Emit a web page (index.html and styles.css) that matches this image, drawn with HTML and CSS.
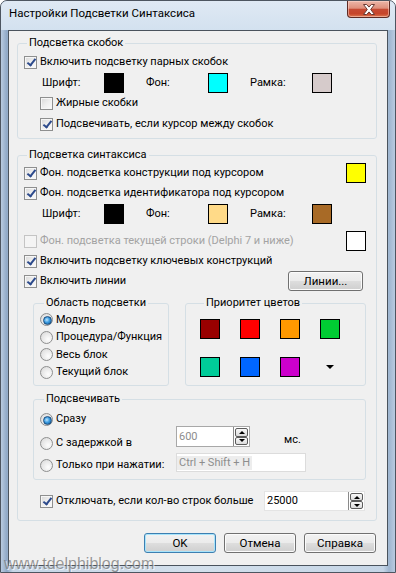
FILE: index.html
```html
<!DOCTYPE html>
<html lang="ru">
<head>
<meta charset="UTF-8">
<title>Настройки Подсветки Синтаксиса</title>
<link rel="stylesheet" href="styles.css">
</head>
<body>
<div class="window">
    <div class="titlebar">
        <span class="title">Настройки Подсветки Синтаксиса</span>
        <span class="close">
            <svg width="14" height="11" viewBox="0 0 14 11"><path d="M1.5 0.5h3.2l2.3 2.6 2.3-2.6h3.2l-3.8 5 3.8 5h-3.2l-2.3-2.6-2.3 2.6h-3.2l3.8-5z" fill="#fff" stroke="#6a3a33" stroke-width="1"/></svg>
        </span>
    </div>

    <div class="client">
        <!-- brackets -->
        <fieldset class="group main brackets">
            <legend>Подсветка скобок</legend>
            <div class="row"><span class="check on"></span><span class="txt">Включить подсветку парных скобок</span></div>
            <div class="colors">
                <span class="clabel">Шрифт:</span><span class="swatch black"></span>
                <span class="clabel">Фон:</span><span class="swatch cyan"></span>
                <span class="clabel">Рамка:</span><span class="swatch rose"></span>
            </div>
            <div class="row indent"><span class="check"></span><span class="txt">Жирные скобки</span></div>
            <div class="row indent mt1"><span class="check on"></span><span class="txt">Подсвечивать, если курсор между скобок</span></div>
        </fieldset>

        <!-- syntax -->
        <fieldset class="group main syntax">
            <legend>Подсветка синтаксиса</legend>
            <div class="row split">
                <span class="opt"><span class="check on"></span><span class="txt">Фон. подсветка конструкции под курсором</span></span>
                <span class="swatch yellow"></span>
            </div>
            <div class="row"><span class="check on"></span><span class="txt">Фон. подсветка идентификатора под курсором</span></div>
            <div class="colors mt3">
                <span class="clabel">Шрифт:</span><span class="swatch black"></span>
                <span class="clabel">Фон:</span><span class="swatch peach"></span>
                <span class="clabel">Рамка:</span><span class="swatch brown"></span>
            </div>
            <div class="row split mt7">
                <span class="opt disabled"><span class="check"></span><span class="txt">Фон. подсветка текущей строки (Delphi 7 и ниже)</span></span>
                <span class="swatch white"></span>
            </div>
            <div class="row"><span class="check on"></span><span class="txt">Включить подсветку ключевых конструкций</span></div>
            <div class="row split">
                <span class="opt"><span class="check on"></span><span class="txt">Включить линии</span></span>
                <button class="btn lines">Линии...</button>
            </div>

            <div class="subgroups">
                <fieldset class="group sub area">
                    <legend>Область подсветки</legend>
                    <div class="radio-row"><span class="radio on"></span><span class="txt">Модуль</span></div>
                    <div class="radio-row"><span class="radio"></span><span class="txt">Процедура/Функция</span></div>
                    <div class="radio-row"><span class="radio"></span><span class="txt">Весь блок</span></div>
                    <div class="radio-row"><span class="radio"></span><span class="txt">Текущий блок</span></div>
                </fieldset>
                <fieldset class="group sub priority">
                    <legend>Приоритет цветов</legend>
                    <div class="prio-grid">
                        <span class="swatch p1"></span>
                        <span class="swatch p2"></span>
                        <span class="swatch p3"></span>
                        <span class="swatch p4"></span>
                        <span class="swatch p5"></span>
                        <span class="swatch p6"></span>
                        <span class="swatch p7"></span>
                        <span class="more"><span class="arrow"></span></span>
                    </div>
                </fieldset>
            </div>

            <fieldset class="group sub when">
                <legend>Подсвечивать</legend>
                <div class="when-row first"><span class="radio on"></span><span class="txt">Сразу</span></div>
                <div class="when-row">
                    <span class="when-label lower"><span class="radio"></span><span class="txt">С задержкой в</span></span>
                    <span class="edit delay">
                        <span class="val dim">600</span>
                        <span class="spin"><span class="up"></span><span class="down"></span></span>
                    </span>
                    <span class="ms">мс.</span>
                </div>
                <div class="when-row mt2">
                    <span class="when-label hot"><span class="radio"></span><span class="txt">Только при нажатии:</span></span>
                    <span class="edit hotkey"><span class="val keys">Ctrl + Shift + H</span></span>
                </div>
            </fieldset>

            <div class="row indent limit">
                <span class="check on"></span><span class="txt">Отключать, если кол-во строк больше</span>
                <span class="edit lines-max">
                    <span class="val">25000</span>
                    <span class="spin"><span class="up"></span><span class="down"></span></span>
                </span>
            </div>
        </fieldset>

        <div class="buttons">
            <button class="btn default">OK</button>
            <button class="btn">Отмена</button>
            <button class="btn">Справка</button>
        </div>
    </div>

    <div class="watermark">www.tdelphiblog.com</div>
</div>
</body>
</html>
```

FILE: styles.css
```css
/* Vista-like dialog */
* {
    box-sizing: border-box;
}

body {
    margin: 0;
    font-family: Roboto, "Liberation Sans", sans-serif;
    font-size: 11px;
    line-height: 14px;
    color: #000;
    background: #fff;
}

.window {
    position: relative;
    width: 396px;
    height: 573px;
    overflow: hidden;
    padding: 0 7px 3px 7px;
    border: 1px solid #4d5560;
    border-radius: 7px 7px 0 0;
    background: linear-gradient(90deg, #b9cbe0 0%, #8fa8c6 1.5%, #c5d5e6 3%, #d3e0ec 50%, #c5d5e6 97%, #9fb6d0 98.5%, #b9cbe0 100%);
}

.titlebar {
    display: flex;
    align-items: flex-start;
    height: 29px;
    margin: 0 -7px;
    padding: 0 5px 0 8px;
    background: linear-gradient(#dfe9f4, #d3e1ef);
}

.title {
    margin: 4px 0 0 0;
    font-size: 11.5px;
    line-height: 16px;
}

.close {
    display: flex;
    align-items: center;
    justify-content: center;
    margin-left: auto;
    width: 43px;
    height: 17px;
    border: 1px solid #5e2b24;
    border-top: none;
    border-radius: 0 0 4px 4px;
    background: linear-gradient(#ecb6a8 0%, #df8f7c 45%, #c64a33 52%, #c6452a 80%, #de7a52 100%);
    box-shadow: inset 0 0 0 1px rgba(255, 220, 210, 0.5);
}

.client {
    width: 380px;
    padding: 0 0 12px 0;
    border: 1px solid #4a535d;
    background: #f0f0f0;
}

/* group boxes */
.group {
    margin: 0;
    padding: 0;
    border: 1px solid #d5dfe5;
    border-radius: 3px;
    min-width: 0;
}

.group legend {
    padding: 0 2px;
    margin-left: 4px;
    line-height: 14px;
}

.main {
    width: 360px;
    margin-left: 8px;
    padding: 0 10px 0 6px;
}

.main legend {
    margin-left: 3px;
}

.brackets {
    margin-top: 5px;
    padding-top: 2px;
    padding-bottom: 4px;
}

.syntax {
    margin-top: 9px;
    padding-top: 1px;
    padding-bottom: 9px;
}

/* rows */
.row {
    display: flex;
    align-items: center;
    height: 20px;
}

.row.split {
    justify-content: space-between;
}

.opt {
    display: flex;
    align-items: center;
}

.indent {
    margin-left: 16px;
}

.mt1 { margin-top: 1px; }
.mt2 { margin-top: 2px; }
.mt3 { margin-top: 3px; }
.mt7 { margin-top: 7px; }

.txt {
    white-space: nowrap;
}

.check + .txt,
.radio + .txt {
    margin-left: 3px;
}

.disabled {
    color: #a3a3a3;
}

/* checkbox */
.check {
    position: relative;
    flex: none;
    width: 13px;
    height: 13px;
    border: 1px solid #8e8f8f;
    background: linear-gradient(135deg, #d8d8d8 0%, #eeeeee 50%, #fbfbfb 100%);
    box-shadow: inset 0 0 0 1px #f6f6f6;
}

.check.on::after {
    content: "";
    position: absolute;
    left: 3.5px;
    top: 0.5px;
    width: 3px;
    height: 7px;
    border: solid #2c4a8c;
    border-width: 0 2px 2px 0;
    transform: rotate(38deg);
}

.disabled .check {
    border-color: #c4c4c4;
    background: #f4f4f4;
    box-shadow: none;
}

/* radio */
.radio {
    position: relative;
    flex: none;
    width: 13px;
    height: 13px;
    border: 1px solid #8e8f8f;
    border-radius: 50%;
    background: radial-gradient(circle at 65% 65%, #fdfdfd 0%, #e6e6e6 60%, #d2d2d2 100%);
}

.radio.on::after {
    content: "";
    position: absolute;
    left: 2px;
    top: 2px;
    width: 7px;
    height: 7px;
    border-radius: 50%;
    border: 1px solid #1d4e7e;
    background: radial-gradient(circle at 40% 40%, #bfe6ff 0%, #3a9be0 45%, #0f4f8c 100%);
}

/* colour swatches */
.colors {
    display: flex;
    align-items: center;
    height: 20px;
    margin-top: 1px;
    margin-left: 18px;
}

.clabel {
    width: 62px;
}

.swatch {
    flex: none;
    width: 20px;
    height: 20px;
    border: 1px solid #000;
}

.colors .swatch {
    margin-right: 22px;
}

.black { background: #000; }
.cyan { background: #00ffff; }
.rose { background: #d6cbcb; }
.yellow { background: #ffff00; }
.peach { background: #ffda88; }
.brown { background: #a86a26; }
.white { background: #fff; }
.p1 { background: #990000; }
.p2 { background: #ff0000; }
.p3 { background: #ff9900; }
.p4 { background: #00cc33; }
.p5 { background: #00cc99; }
.p6 { background: #0066ff; }
.p7 { background: #cc00cc; }

/* buttons */
.btn {
    flex: none;
    height: 20px;
    width: 72px;
    padding: 0;
    font: inherit;
    font-size: 11.5px;
    color: #000;
    border: 1px solid #707070;
    border-radius: 3px;
    background: linear-gradient(#f2f2f2 0%, #ebebeb 48%, #dddddd 52%, #cfcfcf 100%);
    box-shadow: inset 0 0 0 1px #fbfbfb;
}

.btn.lines {
    width: 75px;
    margin-right: 3px;
}

.btn.default {
    border-color: #3c7fb1;
    box-shadow: inset 0 0 0 1px #a8e4fb;
}

.buttons {
    display: flex;
    justify-content: flex-end;
    gap: 8px;
    margin: 12px 11px 0 0;
}

/* sub groups */
.subgroups {
    display: flex;
    gap: 16px;
    margin: 5px 0 0 9px;
}

.sub legend {
    margin-left: 4px;
}

.area {
    width: 136px;
    padding: 1px 0 4px 6px;
}

.radio-row {
    display: flex;
    align-items: center;
    height: 17.5px;
}

.priority {
    width: 181px;
    padding: 9px 0 0 14px;
}

.prio-grid {
    display: grid;
    grid-template-columns: repeat(4, 20px);
    grid-auto-rows: 20px;
    column-gap: 20px;
    row-gap: 18px;
}

.more {
    display: flex;
    align-items: center;
    justify-content: center;
}

.arrow {
    width: 0;
    height: 0;
    border-left: 4px solid transparent;
    border-right: 4px solid transparent;
    border-top: 4px solid #000;
}

.when {
    width: 333px;
    margin: 6px 0 0 9px;
    padding: 0 0 6px 6px;
}

.when-row {
    display: flex;
    align-items: flex-start;
}

.when-row.first {
    align-items: center;
    height: 14px;
    margin-top: 6px;
}

.when-label {
    display: flex;
    align-items: center;
    width: 136px;
    height: 16px;
}

.when-label.lower {
    margin-top: 9px;
}

.when-label.hot {
    margin-top: 4px;
}

.ms {
    margin: 6px 0 0 34px;
    line-height: 16px;
}

/* edits */
.edit {
    flex: none;
    display: flex;
    align-items: center;
    background: #fff;
    border: 1px solid #abadb3;
}

.edit .val {
    padding-left: 2px;
}

.dim {
    color: #8d8d8d;
}

.delay {
    width: 74px;
    height: 21px;
    border-color: #a8a8a8;
}

.hotkey {
    width: 130px;
    height: 19px;
    border-color: #dcdcdc;
}

.keys {
    color: #8d8d8d;
    background: #ededed;
    padding-right: 2px;
}

.limit {
    margin-top: 11px;
}

.lines-max {
    width: 101px;
    height: 20px;
    margin: 0 1px 0 auto;
    border-color: #e4e4e4;
}

.spin {
    display: flex;
    flex-direction: column;
    margin-left: auto;
    width: 16px;
    height: 100%;
    padding: 1px 1px 1px 0;
    border-left: 1px solid #8a8a8a;
}

.spin span {
    flex: 1;
    display: flex;
    align-items: center;
    justify-content: center;
    margin-left: 1px;
    border: 1px solid #5c5c5c;
    border-radius: 2px;
    background: linear-gradient(#f8f8f8, #dcdcdc);
}

.spin .up::after {
    content: "";
    border-left: 3px solid transparent;
    border-right: 3px solid transparent;
    border-bottom: 3px solid #000;
}

.spin .down::after {
    content: "";
    border-left: 3px solid transparent;
    border-right: 3px solid transparent;
    border-top: 3px solid #000;
}

/* watermark over the frame */
.watermark {
    position: absolute;
    left: 3px;
    bottom: -2px;
    font-family: "Liberation Sans", sans-serif;
    font-size: 16px;
    line-height: 20px;
    color: rgba(120, 120, 120, 0.75);
    text-shadow: 1px 1px 0 rgba(255, 255, 255, 0.7);
    pointer-events: none;
}
```
